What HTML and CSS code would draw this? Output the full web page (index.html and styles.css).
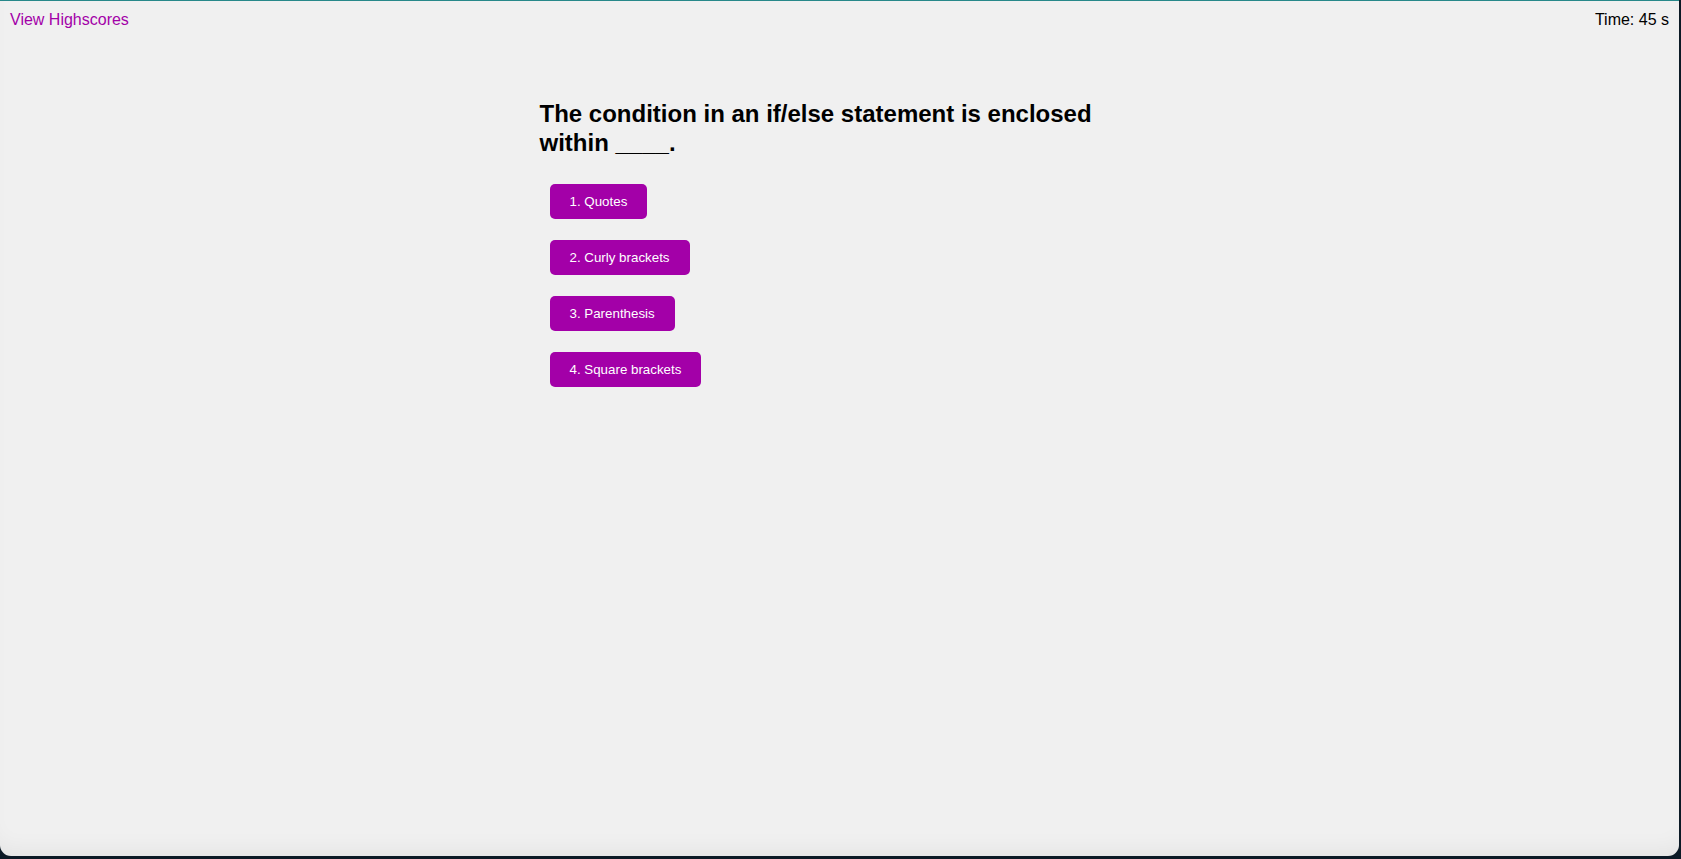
FILE: index.html
```html
<!DOCTYPE html>
<html lang="en">
<head>
<meta charset="utf-8">
<title>Code Quiz</title>
<link rel="stylesheet" href="styles.css">
</head>
<body>
<div class="window">
  <header class="topbar">
    <a class="highscores" href="#">View Highscores</a>
    <div class="timer">Time: 45 s</div>
  </header>
  <main class="quiz">
    <h1 class="question">The condition in an if/else statement is enclosed within ____.</h1>
    <div class="choices">
      <button class="choice">1. Quotes</button>
      <button class="choice">2. Curly brackets</button>
      <button class="choice">3. Parenthesis</button>
      <button class="choice">4. Square brackets</button>
    </div>
  </main>
</div>
</body>
</html>
```
FILE: styles.css
```css
html {
  background: #0c1a26;
  height: 100%;
}
body {
  margin: 0;
  height: 100%;
  font-family: "Liberation Sans", Arial, sans-serif;
}
.window {
  box-sizing: border-box;
  height: 856px;
  margin-right: 2px;
  background: #f0f0f0;
  border-top: 1px solid #27888a;
  border-radius: 0 0 11px 11px;
  overflow: hidden;
  box-shadow: inset 0 -18px 24px -14px rgba(0, 0, 0, 0.06);
}
.topbar {
  display: flex;
  justify-content: space-between;
  align-items: flex-start;
  padding: 10px 10px 0 10px;
  font-size: 16px;
  line-height: 18px;
}
.highscores {
  color: #a300a8;
  text-decoration: none;
}
.timer {
  color: #000;
}
.quiz {
  width: 600px;
  margin: 70px auto 0;
}
.question {
  margin: 0;
  font-size: 24px;
  font-weight: bold;
  line-height: 29px;
  color: #000;
}
.choices {
  display: flex;
  flex-direction: column;
  align-items: flex-start;
  gap: 21px;
  margin-top: 27px;
  padding-left: 10px;
}
.choice {
  font-family: "Liberation Sans", Arial, sans-serif;
  font-size: 13.333px;
  line-height: 15px;
  color: #fff;
  background: #a300a8;
  border: none;
  border-radius: 5px;
  padding: 10px 20px;
  cursor: pointer;
}
```
